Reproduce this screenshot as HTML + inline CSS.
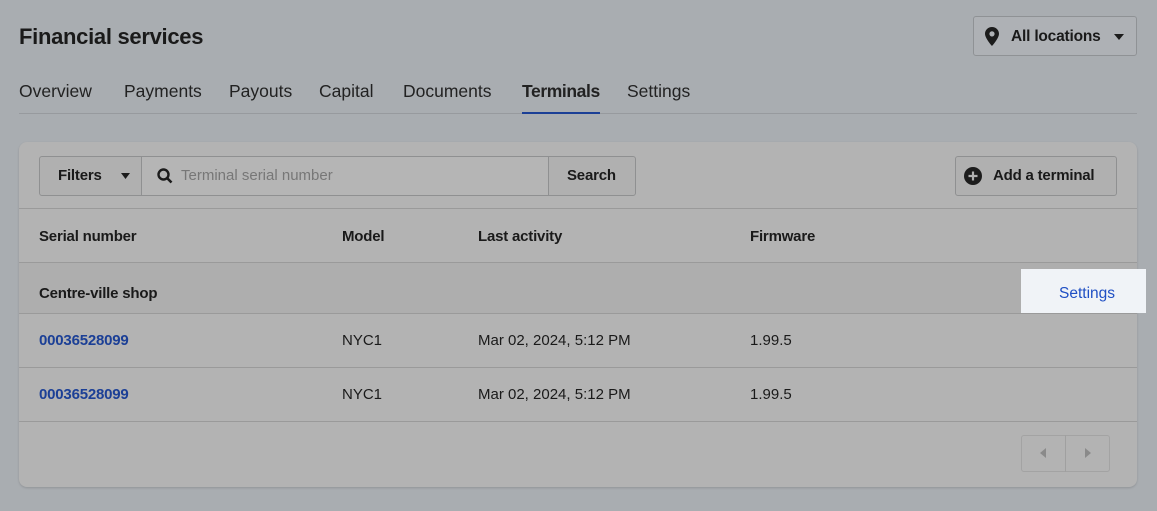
<!DOCTYPE html>
<html><head><style>
*{box-sizing:border-box;margin:0;padding:0}
body{width:1157px;height:511px;background:#a9adb1;font-family:"Liberation Sans",sans-serif;color:#1a1a1a;position:relative;overflow:hidden}
.abs{position:absolute}
h1{position:absolute;left:19px;top:24px;font-size:22px;font-weight:bold;letter-spacing:-0.3px}
.tabs{position:absolute;left:19px;top:81px;font-size:17.5px;color:#222}
.tabs span{position:absolute;white-space:nowrap}
.line{position:absolute;left:19px;width:1118px;top:113px;height:1px;background:#979a9e}
.card{position:absolute;left:19px;top:142px;width:1118px;height:345px;background:#b3b3b3;border-radius:8px;box-shadow:0 1px 2px rgba(0,0,0,.15);overflow:hidden}
.btn{position:absolute;border:1px solid #8f9091;border-radius:3px;background:#b0b0b0;font-size:15px;font-weight:bold;color:#1e1e1e}
.hr{position:absolute;left:0;width:1118px;height:1px;background:#9a9a9a}
.t{position:absolute;font-size:15px;white-space:nowrap}
.b{font-weight:bold;letter-spacing:-0.2px}
.lnk{color:#1b3f96}
</style></head><body>
<h1>Financial services</h1>
<div class="abs" style="left:973px;top:16px;width:164px;height:40px;border:1px solid #8f9295;border-radius:3px;background:#aeb1b5"></div>
<svg class="abs" style="left:985px;top:27px" width="14" height="19" viewBox="0 0 14 19"><path d="M7 0C3.1 0 0 3 0 6.8 0 11.5 7 19 7 19s7-7.5 7-12.2C14 3 10.9 0 7 0zm0 9.5a2.6 2.6 0 110-5.2 2.6 2.6 0 010 5.2z" fill="#1c1c1c"/></svg>
<div class="t b" style="left:1011px;top:28px;font-size:15.5px">All locations</div>
<svg class="abs" style="left:1114px;top:34px" width="10" height="6"><path d="M0 0h10L5 6z" fill="#1c1c1c"/></svg>
<div class="tabs">
<span style="left:0">Overview</span><span style="left:105px">Payments</span><span style="left:210px">Payouts</span><span style="left:300px">Capital</span><span style="left:384px">Documents</span><span style="left:503px;font-weight:bold;letter-spacing:-0.4px">Terminals</span><span style="left:608px">Settings</span>
</div>
<div class="line"></div>
<div class="abs" style="left:522px;top:112px;width:78px;height:2px;background:#1b3f96"></div>
<div class="card">
 <div class="btn" style="left:20px;top:14px;width:103px;height:40px;border-radius:3px 0 0 3px"></div>
 <div class="t b" style="left:39px;top:25px">Filters</div>
 <svg class="abs" style="left:102px;top:31px" width="9" height="6"><path d="M0 0h9L4.5 6z" fill="#1c1c1c"/></svg>
 <div class="abs" style="left:122px;top:14px;width:408px;height:40px;border:1px solid #8f9091;background:#b5b5b5"></div>
 <svg class="abs" style="left:138px;top:26px" width="16" height="16" viewBox="0 0 16 16"><circle cx="6.5" cy="6.5" r="5" stroke="#1c1c1c" stroke-width="2.4" fill="none"/><path d="M10 10l4.5 4.5" stroke="#1c1c1c" stroke-width="2.6"/></svg>
 <div class="t" style="left:162px;top:25px;color:#777">Terminal serial number</div>
 <div class="btn" style="left:529px;top:14px;width:88px;height:40px;border-radius:0 3px 3px 0"></div>
 <div class="t b" style="left:548px;top:25px">Search</div>
 <div class="btn" style="left:936px;top:14px;width:162px;height:40px"></div>
 <svg class="abs" style="left:945px;top:25px" width="18" height="18" viewBox="0 0 18 18"><circle cx="9" cy="9" r="9" fill="#1c1c1c"/><path d="M9 4.5v9M4.5 9h9" stroke="#b0b0b0" stroke-width="2.2"/></svg>
 <div class="t b" style="left:974px;top:25px">Add a terminal</div>
 <div class="hr" style="top:66px"></div>
 <div class="t b" style="left:20px;top:86px">Serial number</div>
 <div class="t b" style="left:323px;top:86px">Model</div>
 <div class="t b" style="left:459px;top:86px">Last activity</div>
 <div class="t b" style="left:731px;top:86px">Firmware</div>
 <div class="hr" style="top:120px"></div>
 <div class="abs" style="left:0;top:121px;width:1118px;height:50px;background:#aeaeae"></div>
 <div class="t b" style="left:20px;top:143px">Centre-ville shop</div>
 <div class="hr" style="top:171px"></div>
 <div class="t b lnk" style="left:20px;top:190px">00036528099</div>
 <div class="t" style="left:323px;top:190px">NYC1</div>
 <div class="t" style="left:459px;top:190px">Mar 02, 2024, 5:12 PM</div>
 <div class="t" style="left:731px;top:190px">1.99.5</div>
 <div class="hr" style="top:225px"></div>
 <div class="t b lnk" style="left:20px;top:244px">00036528099</div>
 <div class="t" style="left:323px;top:244px">NYC1</div>
 <div class="t" style="left:459px;top:244px">Mar 02, 2024, 5:12 PM</div>
 <div class="t" style="left:731px;top:244px">1.99.5</div>
 <div class="hr" style="top:279px"></div>
 <div class="abs" style="left:1002px;top:293px;width:89px;height:37px;border:1px solid #a3a3a3;border-radius:3px"></div>
 <div class="abs" style="left:1046px;top:293px;width:1px;height:37px;background:#a0a0a0"></div>
 <svg class="abs" style="left:1021px;top:306px" width="6" height="10"><path d="M6 0v10L0 5z" fill="#8a8a8a"/></svg>
 <svg class="abs" style="left:1066px;top:306px" width="6" height="10"><path d="M0 0v10l6-5z" fill="#8a8a8a"/></svg>
</div>
<div class="abs" style="left:1021px;top:269px;width:125px;height:44px;background:#f0f3f7"></div>
<div class="t lnk" style="left:1059px;top:285px;color:#1f4fc4;font-size:15.5px">Settings</div>
</body></html>
